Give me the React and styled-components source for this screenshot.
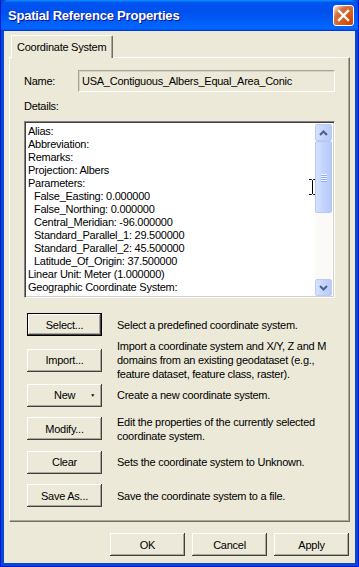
import React from 'react'
import styled, { createGlobalStyle, css } from 'styled-components'

const GlobalStyle = createGlobalStyle`
  html, body { margin: 0; padding: 0; background: #ECE9D8; }
  body {
    font-family: Tahoma, "Liberation Sans", Arial, sans-serif;
    font-size: 11px;
    letter-spacing: -0.25px;
    color: #000;
  }
`

const details = [
  { text: 'Alias:' },
  { text: 'Abbreviation:' },
  { text: 'Remarks:' },
  { text: 'Projection: Albers' },
  { text: 'Parameters:' },
  { text: 'False_Easting: 0.000000', indent: true },
  { text: 'False_Northing: 0.000000', indent: true },
  { text: 'Central_Meridian: -96.000000', indent: true },
  { text: 'Standard_Parallel_1: 29.500000', indent: true },
  { text: 'Standard_Parallel_2: 45.500000', indent: true },
  { text: 'Latitude_Of_Origin: 37.500000', indent: true },
  { text: 'Linear Unit: Meter (1.000000)' },
  { text: 'Geographic Coordinate System:' },
]

const actions = [
  { label: 'Select...', h: 35, desc: ['Select a predefined coordinate system.'], isDefault: true },
  { label: 'Import...', h: 36, desc: ['Import a coordinate system and X/Y, Z and M', 'domains from an existing geodataset (e.g.,', 'feature dataset, feature class, raster).'] },
  { label: 'New', h: 34, desc: ['Create a new coordinate system.'], menu: true },
  { label: 'Modify...', h: 33, desc: ['Edit the properties of the currently selected', 'coordinate system.'] },
  { label: 'Clear', h: 34, desc: ['Sets the coordinate system to Unknown.'] },
  { label: 'Save As...', h: 33, desc: ['Save the coordinate system to a file.'] },
]

function App() {
  return (
    <>
      <GlobalStyle />
      <Window>
        <TitleBar>
          <Title>Spatial Reference Properties</Title>
          <CloseButton>
            <svg width="13" height="13" viewBox="0 0 13 13">
              <path d="M2 2 L11 11 M11 2 L2 11" stroke="#fff" strokeWidth="2.4" strokeLinecap="square" />
            </svg>
          </CloseButton>
        </TitleBar>

        <Body>
          <TabStrip>
            <Tab>Coordinate System</Tab>
          </TabStrip>
          <Panel>
            <NameRow>
              <Label>Name:</Label>
              <NameField>USA_Contiguous_Albers_Equal_Area_Conic</NameField>
            </NameRow>
            <DetailsLabel>Details:</DetailsLabel>
            <DetailsBox>
              <DetailsText>
                {details.map(line => (
                  <DetailLine key={line.text} indent={line.indent}>{line.text}</DetailLine>
                ))}
                <IBeam width="9" height="16" viewBox="0 0 9 16">
                  <path d="M1 0.5 H3.5 L4.5 1.5 L5.5 0.5 H8 M4.5 1.5 V14.5 M1 15.5 H3.5 L4.5 14.5 L5.5 15.5 H8" stroke="#000" strokeWidth="1" fill="none" />
                </IBeam>
              </DetailsText>
              <ScrollBar>
                <ScrollArrow>
                  <svg width="9" height="6" viewBox="0 0 9 6">
                    <path d="M1 5 L4.5 1.5 L8 5" stroke="#4D6185" strokeWidth="2" fill="none" />
                  </svg>
                </ScrollArrow>
                <Thumb>
                  <Grip>
                    <span /><span /><span /><span />
                  </Grip>
                </Thumb>
                <Track />
                <ScrollArrow>
                  <svg width="9" height="6" viewBox="0 0 9 6">
                    <path d="M1 1 L4.5 4.5 L8 1" stroke="#4D6185" strokeWidth="2" fill="none" />
                  </svg>
                </ScrollArrow>
              </ScrollBar>
            </DetailsBox>

            <ActionList>
              {actions.map(action => (
                <ActionRow key={action.label} h={action.h}>
                  <ClassicButton isDefault={action.isDefault} menu={action.menu}>
                    {action.label}
                    {action.menu && <MenuArrow>▼</MenuArrow>}
                  </ClassicButton>
                  <ActionText>
                    {action.desc.map(d => <div key={d}>{d}</div>)}
                  </ActionText>
                </ActionRow>
              ))}
            </ActionList>
          </Panel>

          <Footer>
            <ClassicButton>OK</ClassicButton>
            <ClassicButton>Cancel</ClassicButton>
            <ClassicButton>Apply</ClassicButton>
          </Footer>
        </Body>
      </Window>
    </>
  )
}

const Window = styled.div`
  width: 359px;
  height: 567px;
  box-sizing: border-box;
  display: flex;
  flex-direction: column;
  background: #0846D8;
  border: 1px solid #0019CF;
  border-top: none;
  padding: 0 3px 3px 3px;
  overflow: hidden;
`

const TitleBar = styled.div`
  height: 30px;
  margin: 0 -3px;
  flex-shrink: 0;
  display: flex;
  align-items: center;
  justify-content: space-between;
  padding: 0 4px 1px 7px;
  border-radius: 7px 7px 0 0;
  background: linear-gradient(to bottom, #0997FF 0%, #0053EE 8%, #0050EE 40%, #0066FF 88%, #0066FF 93%, #005BFF 95%, #003DD7 96%, #003DD7 100%);
`

const Title = styled.div`
  color: #fff;
  font-family: "Liberation Sans", Arial, sans-serif;
  font-weight: bold;
  font-size: 13px;
  letter-spacing: -0.2px;
  text-shadow: 1px 1px #0F1089;
`

const CloseButton = styled.div`
  width: 21px;
  height: 21px;
  box-sizing: border-box;
  border: 1px solid #fff;
  border-radius: 3px;
  display: flex;
  align-items: center;
  justify-content: center;
  background: radial-gradient(circle at 90% 90%, #CC4600 0%, #DC6527 55%, #CD7546 70%, #FFCCB2 90%, #fff 100%);
`

const Body = styled.div`
  flex: 1;
  display: flex;
  flex-direction: column;
  background: #ECE9D8;
  padding: 4px 5px 0 5px;
`

const TabStrip = styled.div`
  display: flex;
  padding-left: 2px;
  height: 22px;
  position: relative;
  z-index: 1;
`

const Tab = styled.div`
  height: 23px;
  box-sizing: border-box;
  padding: 0 6px 0 5px;
  display: flex;
  align-items: center;
  background: #ECE9D8;
  border-top: 1px solid #fff;
  border-left: 1px solid #fff;
  border-right: 1px solid #716F64;
  box-shadow: inset -1px 0 #ACA899;
  border-radius: 2px 2px 0 0;
`

const Panel = styled.div`
  height: 465px;
  box-sizing: border-box;
  border: 1px solid;
  border-color: #fff #716F64 #716F64 #fff;
  box-shadow: inset -1px -1px #ACA899;
  padding: 12px 14px 0 14px;
  display: flex;
  flex-direction: column;
`

const NameRow = styled.div`
  display: flex;
  align-items: center;
  height: 22px;
`

const Label = styled.div`
  width: 54px;
  line-height: 13px;
`

const NameField = styled.div`
  flex: 1;
  height: 22px;
  box-sizing: border-box;
  display: flex;
  align-items: center;
  padding-left: 3px;
  border: 1px solid;
  border-color: #A5A297 #fff #fff #A5A297;
  box-shadow: inset 1px 1px #D6D3C5;
`

const DetailsLabel = styled.div`
  margin-top: 8px;
  line-height: 13px;
`

const DetailsBox = styled.div`
  margin-top: 8px;
  height: 177px;
  box-sizing: border-box;
  display: flex;
  background: #fff;
  border: 1px solid;
  border-color: #848284 #fff #fff #848284;
  box-shadow: inset 1px 1px #404040, inset -1px -1px #D4D0C8;
  padding: 2px 2px 1px 2px;
`

const DetailsText = styled.div`
  flex: 1;
  position: relative;
  padding: 1px 0 0 1px;
  overflow: hidden;
`

const DetailLine = styled.div`
  line-height: 13px;
  white-space: nowrap;
  padding-left: ${p => (p.indent ? '6px' : '0')};
`

const IBeam = styled.svg`
  position: absolute;
  right: -2px;
  top: 55px;
`

const ScrollBar = styled.div`
  width: 17px;
  display: flex;
  flex-direction: column;
  background: #FBFAF6;
`

const xpBlue = css`
  box-sizing: border-box;
  border: 1px solid #B4C8F6;
  border-radius: 2px;
  background: linear-gradient(to right, #D6E2FD 0%, #C3D3FC 50%, #B7CAF9 100%);
`

const ScrollArrow = styled.div`
  ${xpBlue};
  height: 17px;
  display: flex;
  align-items: center;
  justify-content: center;
  border-color: #BBCCF4;
`

const Thumb = styled.div`
  ${xpBlue};
  height: 72px;
  display: flex;
  align-items: center;
  justify-content: center;
`

const Grip = styled.div`
  display: flex;
  flex-direction: column;
  gap: 1px;
  span {
    display: block;
    width: 6px;
    height: 1px;
    background: #EEF4FE;
    box-shadow: 0 1px #8CB0F8;
  }
`

const Track = styled.div`
  flex: 1;
`

const ActionList = styled.div`
  margin-top: 9px;
  display: flex;
  flex-direction: column;
`

const ActionRow = styled.div`
  height: ${p => p.h}px;
  display: flex;
  align-items: center;
  padding-left: 3px;
`

const ClassicButton = styled.div`
  width: 75px;
  height: 23px;
  box-sizing: border-box;
  flex-shrink: 0;
  display: flex;
  align-items: center;
  justify-content: ${p => (p.menu ? 'flex-start' : 'center')};
  padding-left: ${p => (p.menu ? '27px' : '0')};
  position: relative;
  background: #ECE9D8;
  box-shadow: inset -1px -1px #404040, inset 1px 1px #fff, inset -2px -2px #ACA899;
  ${p => p.isDefault && css`
    border: 1px solid #000;
  `}
`

const MenuArrow = styled.span`
  position: absolute;
  right: 7px;
  top: 8px;
  font-size: 5px;
  line-height: 6px;
`

const ActionText = styled.div`
  margin-left: 15px;
  line-height: 14px;
  white-space: nowrap;
`

const Footer = styled.div`
  display: flex;
  justify-content: flex-end;
  gap: 7px;
  padding: 11px 1px 0 0;
`

export default App
